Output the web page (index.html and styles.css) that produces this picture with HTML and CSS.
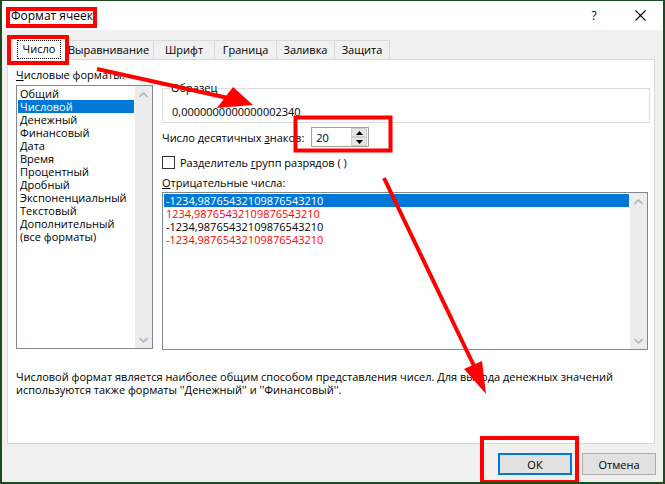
FILE: index.html
```html
<!DOCTYPE html>
<html lang="ru">
<head>
<meta charset="utf-8">
<title>Формат ячеек</title>
<link rel="stylesheet" href="styles.css">
</head>
<body>
<div class="window">
  <div class="titlebar">
    <span class="title">Формат ячеек</span>
    <span class="cap help">?</span>
    <span class="cap close"><svg width="11" height="11" viewBox="0 0 11 11"><path d="M0.5 0.5 L10.5 10.5 M10.5 0.5 L0.5 10.5" stroke="#000" stroke-width="1.1" fill="none"/></svg></span>
  </div>
  <div class="tabs">
    <div class="tab active"><span class="focus">Число</span></div>
    <div class="tab t2">Выравнивание</div>
    <div class="tab t3">Шрифт</div>
    <div class="tab t4">Граница</div>
    <div class="tab t5">Заливка</div>
    <div class="tab t6">Защита</div>
  </div>
  <div class="panel">
    <div class="cols">
      <div class="left">
        <div class="lbl"><u>Ч</u>исловые форматы:</div>
        <div class="listbox fmt">
          <div class="items">
            <div class="item">Общий</div>
            <div class="item sel">Числовой</div>
            <div class="item">Денежный</div>
            <div class="item">Финансовый</div>
            <div class="item">Дата</div>
            <div class="item">Время</div>
            <div class="item">Процентный</div>
            <div class="item">Дробный</div>
            <div class="item">Экспоненциальный</div>
            <div class="item">Текстовый</div>
            <div class="item">Дополнительный</div>
            <div class="item">(все форматы)</div>
          </div>
          <div class="vscroll">
            <svg width="9" height="6" viewBox="0 0 9 6"><path d="M0.5 5 L4.5 1 L8.5 5" stroke="#b4b4b4" stroke-width="1.6" fill="none"/></svg>
            <svg width="9" height="6" viewBox="0 0 9 6"><path d="M0.5 1 L4.5 5 L8.5 1" stroke="#b4b4b4" stroke-width="1.6" fill="none"/></svg>
          </div>
        </div>
      </div>
      <div class="right">
        <fieldset class="sample">
          <legend>Образец</legend>
          <div class="sample-val">0,0000000000000002340</div>
        </fieldset>
        <div class="decimals">
          <span>Число десятичных <u>з</u>наков:</span>
          <div class="spin">
            <span class="spin-val">20</span>
            <div class="spin-btns">
              <div class="sbtn"><svg width="7" height="4" viewBox="0 0 7 4"><path d="M0 4 L3.5 0 L7 4 Z" fill="#000"/></svg></div>
              <div class="sbtn"><svg width="7" height="4" viewBox="0 0 7 4"><path d="M0 0 L3.5 4 L7 0 Z" fill="#000"/></svg></div>
            </div>
          </div>
        </div>
        <div class="check"><span class="box"></span><span>Разделитель <u>г</u>рупп разрядов ( )</span></div>
        <div class="lbl neg-lbl"><u>О</u>трицательные числа:</div>
        <div class="listbox neg">
          <div class="items">
            <div class="item sel">-1234,98765432109876543210</div>
            <div class="item red">1234,98765432109876543210</div>
            <div class="item">-1234,98765432109876543210</div>
            <div class="item red">-1234,98765432109876543210</div>
          </div>
          <div class="vscroll">
            <svg width="9" height="6" viewBox="0 0 9 6"><path d="M0.5 5 L4.5 1 L8.5 5" stroke="#b4b4b4" stroke-width="1.6" fill="none"/></svg>
            <svg width="9" height="6" viewBox="0 0 9 6"><path d="M0.5 1 L4.5 5 L8.5 1" stroke="#b4b4b4" stroke-width="1.6" fill="none"/></svg>
          </div>
        </div>
      </div>
    </div>
    <div class="desc">Числовой формат является наиболее общим способом представления чисел. Для вывода денежных значений<br>используются также форматы ''Денежный'' и ''Финансовый''.</div>
  </div>
  <div class="footer">
    <button class="btn ok">ОК</button>
    <button class="btn">Отмена</button>
  </div>
  <svg class="annot" width="665" height="484" viewBox="0 0 665 484">
    <g fill="none" stroke="#ff0000" stroke-width="4">
      <rect x="8" y="9" width="87" height="17"/>
      <rect x="9" y="37" width="58" height="26"/>
      <rect x="295.5" y="117.5" width="95" height="33"/>
      <rect x="482" y="438" width="95" height="44"/>
      <line x1="97" y1="69" x2="228" y2="98"/>
      <line x1="384" y1="178" x2="475" y2="368"/>
    </g>
    <g fill="#ff0000">
      <polygon points="253,105 233,87 217,108"/>
      <polygon points="486,394 464,369 482,361"/>
    </g>
  </svg>
</div>
</body>
</html>
```

FILE: styles.css
```css
* { box-sizing: border-box; }
html, body { margin: 0; padding: 0; }
body {
  font-family: "Open Sans", "Noto Sans", "Liberation Sans", sans-serif;
  font-size: 11px;
  color: #000;
  background: #fff;
}
.window {
  position: relative;
  width: 665px;
  height: 484px;
  border-style: solid;
  border-color: #1d4a22;
  border-width: 1px 2px 2px 2px;
  background: #f0f0f0;
  display: flex;
  flex-direction: column;
  overflow: hidden;
}
.titlebar {
  height: 29px;
  background: #fff;
  display: flex;
  align-items: center;
  padding-left: 9px;
  flex: none;
}
.title { font-size: 12px; }
.cap {
  width: 46px;
  height: 29px;
  display: flex;
  align-items: center;
  justify-content: center;
}
.help { margin-left: auto; font-size: 12px; }
.tabs {
  height: 29px;
  display: flex;
  align-items: flex-end;
  padding-left: 10px;
  flex: none;
  position: relative;
  z-index: 1;
}
.tab {
  height: 19px;
  border: 1px solid #d9d9d9;
  border-bottom: none;
  margin-left: -1px;
  display: flex;
  align-items: center;
  justify-content: center;
  background: #f0f0f0;
  line-height: 14px;
}
.tab.active {
  height: 22px;
  width: 54px;
  background: #fff;
  margin-bottom: -1px;
  margin-left: 0;
  position: relative;
  z-index: 2;
  margin-right: -2px;
}
.focus {
  border: 1px dotted #000;
  padding: 1px 5px 2px;
}
.t2 { width: 91px; }
.t3 { width: 62px; }
.t4 { width: 63px; }
.t5 { width: 59px; }
.t6 { width: 56px; }
.panel {
  height: 385px;
  margin: 0 8px 0 5px;
  background: #fff;
  border: 1px solid #d9d9d9;
  padding: 8px 0 0 8px;
  flex: none;
}
.cols {
  display: flex;
  gap: 9px;
}
.left { width: 137px; flex: none; }
.right { width: 487px; flex: none; }
.lbl { line-height: 14px; height: 14px; }
u { text-decoration: underline; text-underline-offset: 1px; }
.listbox {
  border: 1px solid #828790;
  background: #fff;
  display: flex;
}
.listbox .items {
  flex: 1;
  padding: 1px 1px 0 1px;
}
.item {
  height: 13px;
  line-height: 13px;
  padding-left: 2px;
  white-space: nowrap;
}
.item.sel { background: #0078d7; color: #fff; }
.item.red { color: #ff0000; }
.vscroll {
  width: 17px;
  flex: none;
  background: #ececec;
  display: flex;
  flex-direction: column;
  justify-content: space-between;
  align-items: center;
  padding: 6px 0 5px;
}
.fmt { margin-top: 3px; height: 264px; }
.sample {
  margin: 13px 0 0 0;
  border: 1px solid #dcdcdc;
  padding: 0 9px 3px 9px;
  min-inline-size: 0;
  width: 488px;
}
.sample legend {
  padding: 0 1px;
  margin-left: -2px;
  line-height: 14px;
}
.sample-val { margin-top: 10px; line-height: 14px; }
.decimals {
  display: flex;
  align-items: center;
  margin-top: 4px;
  height: 20px;
  gap: 7px;
}
.spin {
  width: 58px;
  height: 20px;
  border: 1px solid #a0a0a0;
  background: #fff;
  display: flex;
  align-items: center;
  justify-content: space-between;
  padding-left: 4px;
}
.spin-btns {
  width: 16px;
  height: 18px;
  display: flex;
  flex-direction: column;
  margin-right: 1px;
}
.sbtn {
  flex: 1;
  background: #e5e5e5;
  border: 1px solid #cfcfcf;
  display: flex;
  align-items: center;
  justify-content: center;
}
.check {
  display: flex;
  align-items: center;
  gap: 5px;
  margin-top: 9px;
  height: 13px;
}
.box {
  width: 13px;
  height: 13px;
  border: 1px solid #333;
  background: #fff;
}
.neg-lbl { margin-top: 7px; }
.neg { margin-top: 2px; height: 158px; width: 486px; }
.neg .items { padding-left: 1px; }
.neg .item { padding-left: 2px; }
.desc {
  margin-top: 20px;
  line-height: 13px;
}
.footer {
  display: flex;
  justify-content: flex-end;
  gap: 10px;
  padding: 9px 7px 0 0;
}
.btn {
  font-family: "Open Sans", "Noto Sans", "Liberation Sans", sans-serif;
  font-size: 11px;
  width: 74px;
  height: 22px;
  background: #e1e1e1;
  border: 1px solid #adadad;
  padding: 0;
  color: #000;
}
.btn.ok { border: 2px solid #0078d7; }
.annot {
  position: absolute;
  left: -2px;
  top: -1px;
  pointer-events: none;
  z-index: 5;
}
```
